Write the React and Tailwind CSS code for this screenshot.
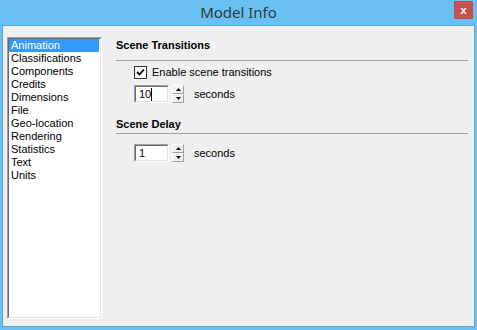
import React from "react";

const items = [
  "Animation",
  "Classifications",
  "Components",
  "Credits",
  "Dimensions",
  "File",
  "Geo-location",
  "Rendering",
  "Statistics",
  "Text",
  "Units",
];

function Spinner() {
  return (
    <div className="flex flex-col w-[12px] h-[18px] ml-[3px]">
      <div className="flex-1 flex items-center justify-center bg-[#f0f0f0] border-t border-l border-white border-b border-r border-b-[#a0a0a0] border-r-[#a0a0a0]">
        <svg width="5" height="3" viewBox="0 0 5 3">
          <path d="M2.5 0 L5 3 L0 3 Z" fill="#000" />
        </svg>
      </div>
      <div className="flex-1 flex items-center justify-center bg-[#f0f0f0] border-t border-l border-white border-b border-r border-b-[#a0a0a0] border-r-[#a0a0a0]">
        <svg width="5" height="3" viewBox="0 0 5 3">
          <path d="M0 0 L5 0 L2.5 3 Z" fill="#000" />
        </svg>
      </div>
    </div>
  );
}

function NumberField({ value, caret }) {
  return (
    <div className="flex items-center h-[18px] ml-[18px]">
      <div className="w-[35px] h-[18px] border-t border-l border-[#a0a0a0] border-b border-r border-b-white border-r-white">
        <div className="h-full border-t border-l border-[#696969] border-b border-r border-b-[#e3e3e3] border-r-[#e3e3e3] bg-white flex items-center pl-[3px]">
          <span className="leading-[13px]">{value}</span>
          {caret && <span className="w-px h-[13px] bg-black" />}
        </div>
      </div>
      <Spinner />
      <span className="ml-[10px] leading-[13px]">seconds</span>
    </div>
  );
}

export default function App() {
  return (
    <div
      className="w-[477px] h-[330px] bg-[#68c1f0] flex flex-col px-[2px] pb-[3px] text-[11px] text-black"
      style={{ fontFamily: '"Liberation Sans", Arial, sans-serif' }}
    >
      <div className="h-[25px] relative flex items-center justify-center shrink-0">
        <span
          className="text-[15px] text-[#2b3a48] leading-none"
          style={{ fontFamily: '"Noto Sans", "Open Sans", sans-serif' }}
        >
          Model Info
        </span>
        <div className="absolute right-[2px] top-[1px] w-[19px] h-[18px] bg-[#c75050] flex items-center justify-center text-white font-bold text-[11px] leading-none">
          x
        </div>
      </div>

      <div className="flex-1 border border-[#5aa6d6] bg-[#f0f0f0] flex">
        {/* list box */}
        <div className="ml-[4px] mt-[11px] mb-[7px] w-[95px] border-t border-l border-[#a0a0a0] border-b border-r border-b-white border-r-white">
          <div className="h-full border-t border-l border-[#696969] border-b border-r border-b-[#e3e3e3] border-r-[#e3e3e3] bg-white">
            <ul className="pr-px">
              {items.map((it, i) => (
                <li
                  key={it}
                  className={
                    "h-[13px] leading-[13px] pl-[2px] whitespace-nowrap " +
                    (i === 0 ? "bg-[#3399ff] text-white" : "")
                  }
                >
                  {it}
                </li>
              ))}
            </ul>
          </div>
        </div>

        {/* settings */}
        <div className="flex-1 ml-[14px] mr-[6px] flex flex-col">
          <div className="mt-[13px] font-bold leading-[13px]">Scene Transitions</div>
          <div className="mt-[8px] h-px bg-[#a0a0a0]" />
          <div className="mt-[5px] ml-[18px] flex items-center h-[13px]">
            <div className="w-[13px] h-[13px] border border-[#333333] bg-white flex items-center justify-center">
              <svg width="9" height="9" viewBox="0 0 9 9">
                <path d="M1 4 L3.5 6.5 L8 1.5" stroke="#000" strokeWidth="1.8" fill="none" />
              </svg>
            </div>
            <span className="ml-[5px] leading-[13px]">Enable scene transitions</span>
          </div>
          <div className="mt-[6px]">
            <NumberField value="10" caret />
          </div>

          <div className="mt-[15px] font-bold leading-[13px]">Scene Delay</div>
          <div className="mt-[2px] h-px bg-[#a0a0a0]" />
          <div className="mt-[10px]">
            <NumberField value="1" />
          </div>
        </div>
      </div>
    </div>
  );
}
